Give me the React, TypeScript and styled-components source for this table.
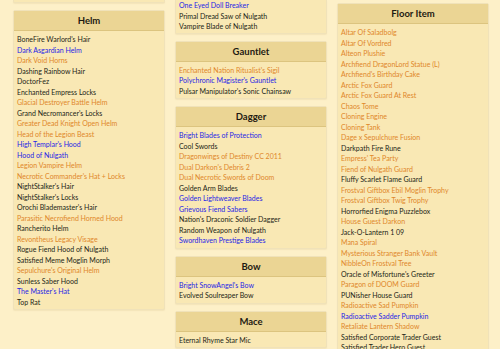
import React from 'react'
import styled, { createGlobalStyle } from 'styled-components'

type Tone = 'plain' | 'blue' | 'orange'

interface Item {
  name: string
  tone?: Tone
}

interface Section {
  title?: string
  items: Item[]
  cut?: boolean
}

const b = (name: string): Item => ({ name, tone: 'blue' })
const o = (name: string): Item => ({ name, tone: 'orange' })
const p = (name: string): Item => ({ name })

const leftColumn: Section[] = [
  { cut: true, items: [] },
  {
    title: 'Helm',
    items: [
      p("BoneFire Warlord's Hair"),
      b('Dark Asgardian Helm'),
      o('Dark Void Horns'),
      p('Dashing Rainbow Hair'),
      p('DoctorFez'),
      p('Enchanted Empress Locks'),
      o('Glacial Destroyer Battle Helm'),
      p("Grand Necromancer's Locks"),
      o('Greater Dead Knight Open Helm'),
      o('Head of the Legion Beast'),
      b("High Templar's Hood"),
      b('Hood of Nulgath'),
      o('Legion Vampire Helm'),
      o("Necrotic Commander's Hat + Locks"),
      p("NightStalker's Hair"),
      p("NightStalker's Locks"),
      p("Orochi Blademaster's Hair"),
      o('Parasitic Necrofiend Horned Hood'),
      p('Rancherito Helm'),
      o('Revontheus Legacy Visage'),
      p('Rogue Fiend Hood of Nulgath'),
      p('Satisfied Meme Moglin Morph'),
      o("Sepulchure's Original Helm"),
      p('Sunless Saber Hood'),
      b("The Master's Hat"),
      p('Top Rat'),
    ],
  },
]

const middleColumn: Section[] = [
  {
    cut: true,
    items: [
      b('One Eyed Doll Breaker'),
      p('Primal Dread Saw of Nulgath'),
      p('Vampire Blade of Nulgath'),
    ],
  },
  {
    title: 'Gauntlet',
    items: [
      o("Enchanted Nation Ritualist's Sigil"),
      b("Polychronic Magister's Gauntlet"),
      p("Pulsar Manipulator's Sonic Chainsaw"),
    ],
  },
  {
    title: 'Dagger',
    items: [
      b('Bright Blades of Protection'),
      p('Cool Swords'),
      o('Dragonwings of Destiny CC 2011'),
      o("Dual Darkon's Debris 2"),
      o('Dual Necrotic Swords of Doom'),
      p('Golden Arm Blades'),
      b('Golden Lightweaver Blades'),
      b('Grievous Fiend Sabers'),
      p("Nation's Draconic Soldier Dagger"),
      p('Random Weapon of Nulgath'),
      b('Swordhaven Prestige Blades'),
    ],
  },
  {
    title: 'Bow',
    items: [b("Bright SnowAngel's Bow"), p('Evolved Soulreaper Bow')],
  },
  {
    title: 'Mace',
    items: [p('Eternal Rhyme Star Mic')],
  },
]

const rightColumn: Section[] = [
  {
    title: 'Floor Item',
    items: [
      o('Altar Of Saladbolg'),
      o('Altar Of Vordred'),
      o('Alteon Plushie'),
      o('Archfiend DragonLord Statue (L)'),
      o("Archfiend's Birthday Cake"),
      o('Arctic Fox Guard'),
      o('Arctic Fox Guard At Rest'),
      o('Chaos Tome'),
      o('Cloning Engine'),
      o('Cloning Tank'),
      o('Dage x Sepulchure Fusion'),
      p('Darkpath Fire Rune'),
      o("Empress' Tea Party"),
      o('Fiend of Nulgath Guard'),
      p('Fluffy Scarlet Flame Guard'),
      o('Frostval Giftbox Ebil Moglin Trophy'),
      o('Frostval Giftbox Twig Trophy'),
      p('Horrorfied Enigma Puzzlebox'),
      o('House Guest Darkon'),
      p('Jack-O-Lantern 1 09'),
      o('Mana Spiral'),
      o('Mysterious Stranger Bank Vault'),
      o('NibbleOn Frostval Tree'),
      p("Oracle of Misfortune's Greeter"),
      o('Paragon of DOOM Guard'),
      p('PUNisher House Guard'),
      o('Radioactive Sad Pumpkin'),
      b('Radioactive Sadder Pumpkin'),
      o('Retaliate Lantern Shadow'),
      p('Satisfied Corporate Trader Guest'),
      p('Satisfied Trader Hero Guest'),
    ],
  },
]

const GlobalStyle = createGlobalStyle`
  html, body {
    margin: 0;
    padding: 0;
    background: #fdf0c8;
  }
`

const toneColors: Record<Tone, string> = {
  plain: '#231f16',
  blue: '#1f1fe6',
  orange: '#e0872a',
}

export default function App() {
  const renderColumn = (sections: Section[], offset: number) => (
    <Column $offset={offset}>
      {sections.map((section, index) => (
        <Panel key={index} $cut={section.cut}>
          {section.title && <PanelHeader>{section.title}</PanelHeader>}
          <ItemList $cut={section.cut} $empty={section.items.length === 0}>
            {section.items.map((item) => (
              <ItemRow key={item.name} $tone={item.tone || 'plain'}>
                {item.name}
              </ItemRow>
            ))}
          </ItemList>
        </Panel>
      ))}
    </Column>
  )

  return (
    <>
      <GlobalStyle />
      <Page>
        {renderColumn(leftColumn, 0)}
        {renderColumn(middleColumn, 0)}
        {renderColumn(rightColumn, 3)}
      </Page>
    </>
  )
}

const Page = styled.div`
  display: grid;
  grid-template-columns: 152px 152px 152px;
  column-gap: 10px;
  align-items: start;
  padding: 0 11px 0 13px;
  height: 349px;
  overflow: hidden;
  font-family: 'Lato', 'Noto Sans', sans-serif;
`

const Column = styled.div<{ $offset: number }>`
  display: flex;
  flex-direction: column;
  gap: 7px;
  margin-top: ${(p) => p.$offset}px;
`

const Panel = styled.div<{ $cut?: boolean }>`
  background: #f9e8b4;
  border: 1px solid #f0e2b9;
  border-top: ${(p) => (p.$cut ? 'none' : '1px solid #f0e2b9')};
  border-radius: ${(p) => (p.$cut ? '0 0 2px 2px' : '2px')};
  box-shadow: 0 1px 1px rgba(180, 150, 80, 0.12);
`

const PanelHeader = styled.div`
  height: 19px;
  line-height: 19px;
  text-align: center;
  background: #ebd594;
  border-bottom: 1px solid #dcc47f;
  color: #1e1a12;
  font-size: 9.5px;
  font-weight: 700;
`

const ItemList = styled.div<{ $cut?: boolean; $empty?: boolean }>`
  padding: ${(p) => (p.$empty ? '1px 0' : p.$cut ? '0 3px 1px 3px' : '3px 3px 2px 3px')};
`

const ItemRow = styled.div<{ $tone: Tone }>`
  font-size: 7px;
  line-height: 10.5px;
  white-space: nowrap;
  color: ${(p) => toneColors[p.$tone]};
`
